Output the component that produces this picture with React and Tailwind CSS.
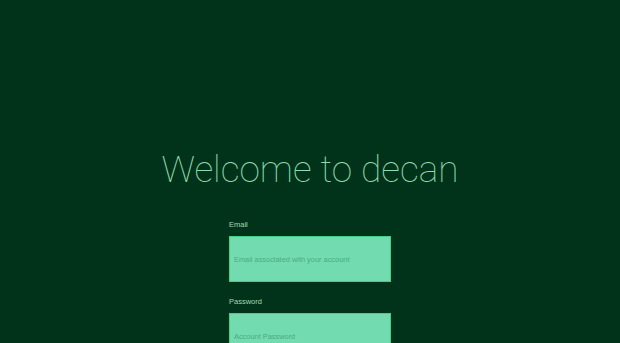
const App = () => {
  return (
    <div className="min-h-[343px] w-full bg-[#00331a] font-['Roboto',sans-serif] overflow-hidden">
      <div className="flex flex-col items-center pt-[151px]">
        {/* Heading */}
        <h1 className="text-[37px] font-thin leading-none text-[#8fdcb0]">
          Welcome to decan
        </h1>

        {/* Form */}
        <form className="mt-[32px] w-[162px] flex flex-col font-['Liberation_Sans',sans-serif]">
          <label className="text-[7.5px] leading-[10px] text-[#a3d9b5] mb-[6px]">Email</label>
          <input
            type="email"
            placeholder="Email associated with your account"
            className="h-[46px] w-full bg-[#72dbb0] border border-[#3fd283] px-[4px] text-[7.4px] text-[#2e7a55] placeholder:text-[#4cab7e] outline-none"
          />
          <label className="mt-[15px] text-[7.5px] leading-[10px] text-[#a3d9b5] mb-[6px]">Password</label>
          <input
            type="password"
            placeholder="Account Password"
            className="h-[46px] w-full bg-[#72dbb0] border border-[#3fd283] px-[4px] text-[7.4px] text-[#2e7a55] placeholder:text-[#4cab7e] outline-none"
          />
        </form>
      </div>
    </div>
  );
};

export default App;
